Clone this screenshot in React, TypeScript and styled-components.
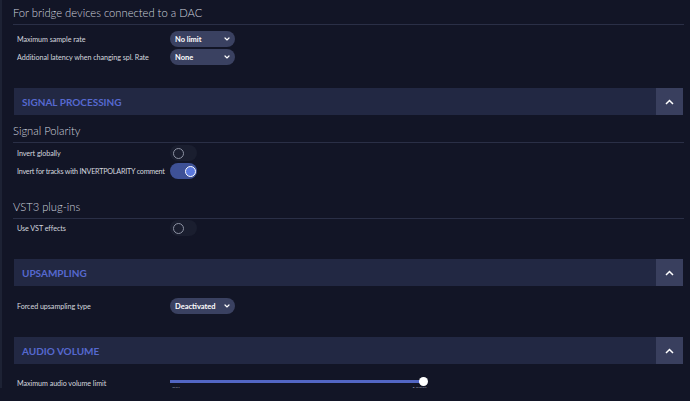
import { FC } from "react"
import styled, { createGlobalStyle } from "styled-components"

const GlobalStyle = createGlobalStyle`
  body {
    margin: 0;
    background: #121526;
    font-family: Lato, "Open Sans", sans-serif;
  }
`

const Page = styled.div`
  height: 388px;
  overflow: hidden;
  border-left: 2px solid #1d2234;
  padding: 0 6px 0 11px;
`

const SubHeading = styled.h3<{ $top?: number }>`
  margin: ${(p) => p.$top ?? 0}px 0 0;
  padding: 5px 0 3px;
  font-size: 11.2px;
  font-weight: 300;
  line-height: 16px;
  color: #d0d3de;
  border-bottom: 1px solid #2a2f46;
`

const Rows = styled.div<{ $top: number }>`
  display: flex;
  flex-direction: column;
  gap: 2px;
  margin-top: ${(p) => p.$top}px;
  padding-left: 4px;
`

const Row = styled.div`
  display: grid;
  grid-template-columns: 153px auto;
  align-items: center;
  height: 16px;
  font-size: 7.2px;
  letter-spacing: -0.06px;
  white-space: nowrap;
  color: #d3d6df;
`

const Label = styled.span<{ $tight?: boolean }>`
  letter-spacing: ${(p) => (p.$tight ? "-0.22px" : "inherit")};
`

const SectionBar = styled.div<{ $top: number }>`
  margin: ${(p) => p.$top}px 1px 0;
  height: 27px;
  display: flex;
  align-items: center;
  justify-content: space-between;
  background: #222843;
`

const SectionTitle = styled.span`
  padding-left: 8px;
  font-size: 10px;
  font-weight: 700;
  color: #5669cf;
`

const CollapseButton = styled.span`
  width: 27px;
  height: 27px;
  display: flex;
  align-items: center;
  justify-content: center;
  background: #393f5e;
`

const Select = styled.div`
  width: 65px;
  height: 16px;
  box-sizing: border-box;
  border-radius: 8px;
  padding: 0 5px;
  display: flex;
  align-items: center;
  justify-content: space-between;
  background: #3a4161;
  font-size: 7.5px;
  font-weight: 700;
  letter-spacing: 0;
  color: #fff;
`

const Toggle = styled.span<{ $on?: boolean }>`
  position: relative;
  display: inline-block;
  width: 27px;
  height: 16px;
  border-radius: 8px;
  background: ${(p) => (p.$on ? "#3e5196" : "#1a1e2f")};

  &::after {
    content: "";
    position: absolute;
    top: 2.5px;
    left: ${(p) => (p.$on ? 15 : 3)}px;
    width: 11px;
    height: 11px;
    box-sizing: border-box;
    border-radius: 50%;
    border: 1.5px solid ${(p) => (p.$on ? "#ffffff" : "#8d92a3")};
    background: ${(p) => (p.$on ? "#5b78dd" : "transparent")};
  }
`

const Slider = styled.div`
  position: relative;
  width: 253px;
  height: 16px;
`

const Track = styled.div`
  position: absolute;
  top: 5px;
  left: 0;
  right: 0;
  height: 3px;
  background: #5266c4;
`

const Thumb = styled.div`
  position: absolute;
  top: 2px;
  right: -4.5px;
  width: 9px;
  height: 9px;
  border-radius: 50%;
  background: #fff;
`

const Ticks = styled.div`
  position: absolute;
  top: 10px;
  left: 2px;
  right: -4px;
  display: flex;
  justify-content: space-between;
  font-size: 6px;
  color: #9aa0b5;
`

const ChevronDown: FC = () => (
  <svg width="6" height="4" viewBox="0 0 6 4">
    <path d="M1 1l2 2 2-2" fill="none" stroke="#fff" strokeWidth="1.2" strokeLinecap="round" />
  </svg>
)

const ChevronUp: FC = () => (
  <svg width="9" height="6" viewBox="0 0 9 6">
    <path d="M1 5l3.5-3.5L8 5" fill="none" stroke="#fff" strokeWidth="1.5" />
  </svg>
)

const Section: FC<{ title: string; top: number }> = ({ title, top }) => (
  <SectionBar $top={top}>
    <SectionTitle>{title}</SectionTitle>
    <CollapseButton>
      <ChevronUp />
    </CollapseButton>
  </SectionBar>
)

const Dropdown: FC<{ value: string }> = ({ value }) => (
  <Select>
    {value}
    <ChevronDown />
  </Select>
)

const App: FC = () => {
  return (
    <>
      <GlobalStyle />
      <Page>
        <SubHeading>For bridge devices connected to a DAC</SubHeading>
        <Rows $top={6}>
          <Row>
            <Label>Maximum sample rate</Label>
            <Dropdown value="No limit" />
          </Row>
          <Row>
            <Label>Additional latency when changing spl. Rate</Label>
            <Dropdown value="None" />
          </Row>
        </Rows>

        <Section title="SIGNAL PROCESSING" top={23} />
        <SubHeading $top={3}>Signal Polarity</SubHeading>
        <Rows $top={2}>
          <Row>
            <Label>Invert globally</Label>
            <Toggle />
          </Row>
          <Row>
            <Label $tight>Invert for tracks with INVERTPOLARITY comment</Label>
            <Toggle $on />
          </Row>
        </Rows>
        <SubHeading $top={15}>VST3 plug-ins</SubHeading>
        <Rows $top={1}>
          <Row>
            <Label>Use VST effects</Label>
            <Toggle />
          </Row>
        </Rows>

        <Section title="UPSAMPLING" top={23} />
        <Rows $top={12}>
          <Row>
            <Label>Forced upsampling type</Label>
            <Dropdown value="Deactivated" />
          </Row>
        </Rows>

        <Section title="AUDIO VOLUME" top={23} />
        <Rows $top={11}>
          <Row>
            <Label>Maximum audio volume limit</Label>
            <Slider>
              <Track />
              <Thumb />
              <Ticks>
                <span>0%</span>
                <span>100%</span>
              </Ticks>
            </Slider>
          </Row>
        </Rows>
      </Page>
    </>
  )
}

export default App
